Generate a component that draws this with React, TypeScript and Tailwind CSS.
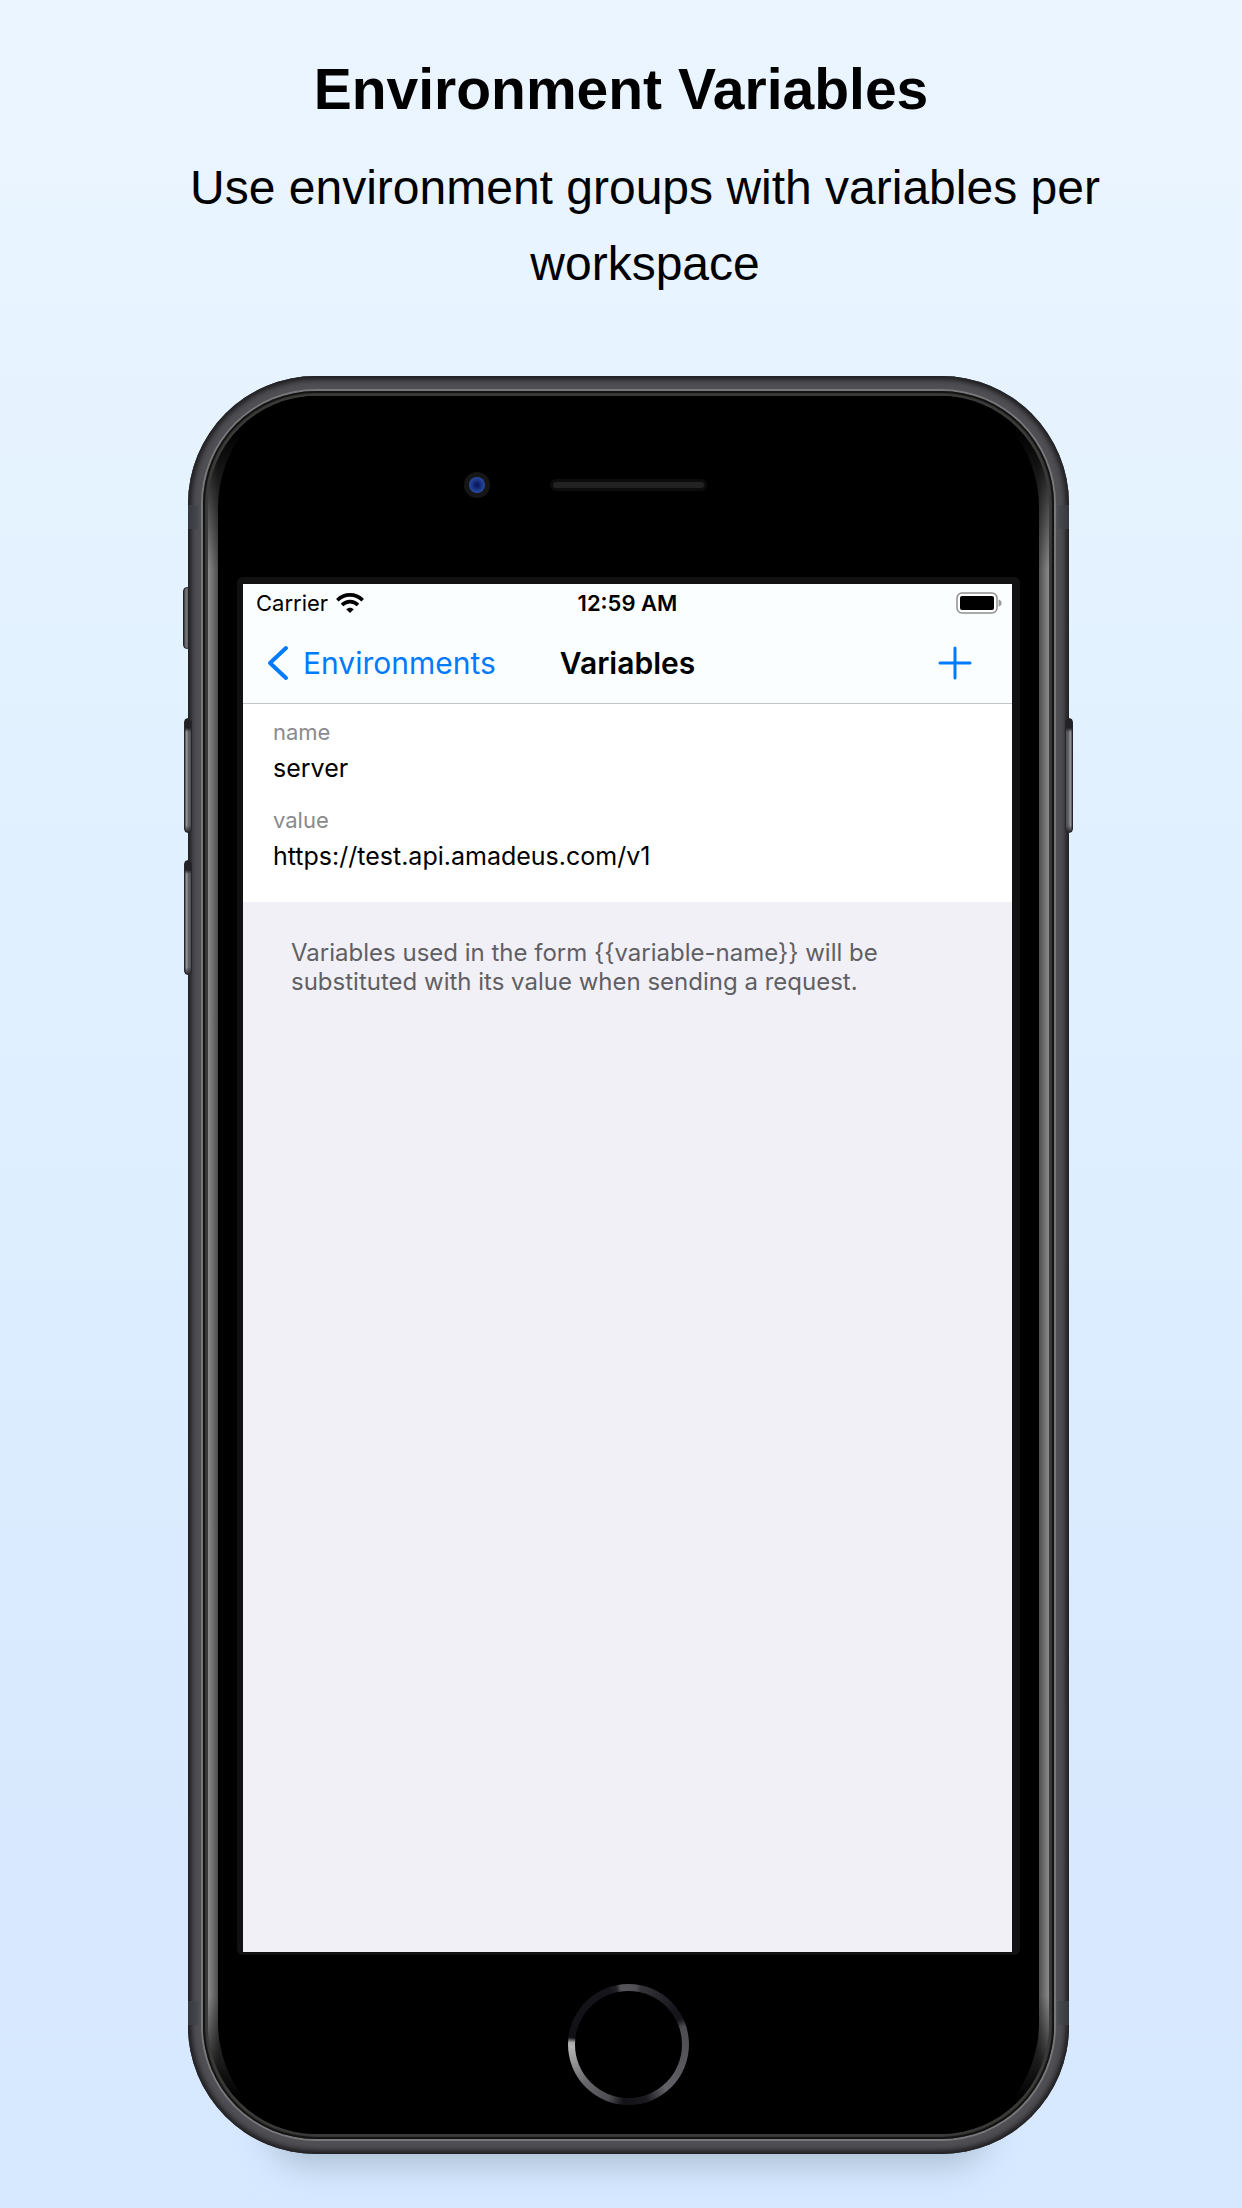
import React from "react";

function WifiIcon() {
  return (
    <svg viewBox="0 0 28 20" className="h-5 w-7" aria-label="Wi-Fi">
      <g fill="none" stroke="#000" strokeWidth="3.6">
        <path d="M1.3 7.2C8.4 .1 19.6 .1 26.7 7.2" />
        <path d="M6 12C10.6 7.5 17.4 7.5 22 12" />
      </g>
      <path d="M10.2 16.2c2.2-2.1 5.4-2.1 7.6 0L14 20z" />
    </svg>
  );
}

function BatteryIcon() {
  return (
    <svg viewBox="0 0 46 22" className="h-[22px] w-[46px]" aria-label="Battery full">
      <rect x="1" y="1" width="40" height="20" rx="5" fill="#fff" stroke="#8f8f8f" strokeWidth="1.5" />
      <rect x="4" y="4" width="34" height="14" rx="2" />
      <path d="M42.600 7.500c4 1 4 6 0 7z" fill="#9a9a9a" />
    </svg>
  );
}

function Field({ id, label, value }: { id: string; label: string; value: string }) {
  return (
    <div className="flex flex-col">
      <label htmlFor={id} className="text-[22px] leading-7 text-[#8a8a8e]">
        {label}
      </label>
      <input
        id={id}
        defaultValue={value}
        className="mt-1 h-9 w-full bg-transparent p-0 text-[25px] leading-9 text-black outline-none"
      />
    </div>
  );
}

function Screen() {
  return (
    <div className="flex aspect-[769/1368] w-full flex-col bg-[#f1f0f6] font-['Inter',sans-serif]">
      <header className="border-b border-[#c4c5c8] bg-[#fbfeff]">
        <div className="grid h-[38px] grid-cols-3 items-center px-[10px] text-[22px] leading-6">
          <div className="flex items-center gap-2 pl-[3px]">
            <span>Carrier</span>
            <WifiIcon />
          </div>
          <span className="text-center font-semibold">12:59 AM</span>
          <div className="flex justify-end">
            <BatteryIcon />
          </div>
        </div>
        <div className="grid h-[81px] grid-cols-[1fr_auto_1fr] items-center px-6">
          <button className="flex items-center gap-3.5 text-[30px] leading-9 text-[#007aff]">
            <svg viewBox="0 0 22 36" className="h-9 w-[22px]">
              <path d="M19 3L3 18L19 33" fill="none" stroke="currentColor" strokeWidth="4" strokeLinecap="round" strokeLinejoin="round" />
            </svg>
            Environments
          </button>
          <h2 className="text-[30px] font-semibold leading-9">Variables</h2>
          <button aria-label="Add variable" className="mr-4 justify-self-end text-[#007aff]">
            <svg viewBox="0 0 34 34" className="h-[34px] w-[34px]">
              <path d="M17 2V32M2 17H32" fill="none" stroke="currentColor" strokeWidth="3" strokeLinecap="round" />
            </svg>
          </button>
        </div>
      </header>
      <form className="flex flex-col gap-5 bg-white px-[30px] pb-7 pt-[14px]">
        <Field id="variable-name" label="name" value="server" />
        <Field id="variable-value" label="value" value="https://test.api.amadeus.com/v1" />
      </form>
      <p className="px-12 pt-9 text-[24px] leading-[29px] text-[#5f5f64]">
        Variables used in the form {"{{variable-name}}"} will be
        <br />
        substituted with its value when sending a request.
      </p>
    </div>
  );
}

const sideKey =
  "absolute w-2 rounded-sm border border-[#26262a] bg-[linear-gradient(180deg,#222226_0px,#222226_9px,transparent_13px,transparent_94%,#2b2b2f),linear-gradient(90deg,#4b4c50,#a0a0a4_30%,#66676b_50%,#505156)]";

const band = "absolute h-6 w-[15px] bg-[linear-gradient(90deg,#34373b,#44474c_60%,#55585c)]";

function Phone() {
  return (
    <div className="relative">
      <div className="absolute inset-x-20 bottom-0 h-20 translate-y-3 rounded-full bg-[#8198ac] opacity-50 blur-lg" />
      <div className="absolute -left-[5px] top-[211px] h-[62px] w-2 rounded-sm border border-[#222226] bg-[linear-gradient(90deg,#37383c,#77787c_35%,#45464a)]" />
      <div className="relative rounded-[128px] bg-[#515156] p-[13px] shadow-[inset_0_0_4px_3px_#202022,inset_0_0_10px_4px_#3b3b40]">
        <div className={band + " left-0 top-[129px]"} />
        <div className={band + " right-0 top-[129px] -scale-x-100"} />
        <div className={band + " bottom-[129px] left-0"} />
        <div className={band + " bottom-[129px] right-0 -scale-x-100"} />
        <div className="relative rounded-[115px] bg-[#77777c] p-[2px]">
          <div className="rounded-[113px] bg-[#3a3a38] p-[5px] shadow-[inset_0_0_1px_2px_#121211]">
            <div className="rounded-[108px] bg-[linear-gradient(180deg,#000_2%,transparent_10%,transparent_92%,#000_98%),linear-gradient(90deg,#8c8c8c_0px,#484848_11px,#484848_calc(100%-11px),#8c8c8c)] px-[10px]">
              <div className="rounded-[98px/112px] bg-black px-[19px]">
                <div className="grid h-[181px] grid-cols-[1fr_auto_1fr] items-center pb-1">
                  <div className="mr-[60px] flex size-[26px] items-center justify-center justify-self-end rounded-full bg-[#161616]">
                    <div className="size-4 rounded-full bg-[radial-gradient(circle_at_50%_50%,#0a1a5c_10%,#23439a_60%,#3c64ae)]" />
                  </div>
                  <div className="h-3 w-[157px] rounded-full border-[3px] border-[#0c0c0c] bg-[#222]" />
                </div>
                <div className="rounded-md bg-[#111] pb-[3px] pl-1.5 pr-2 pt-[7px]">
                  <Screen />
                </div>
                <div className="flex h-[179px] items-center justify-center">
                  <button
                    aria-label="Home"
                    className="size-[121px] rounded-full bg-[conic-gradient(#545458_0deg,#505054_8deg,#35353a_12deg,#15151b_55deg,#15151b_64deg,#4b4b50_72deg,#5a5a60_120deg,#626267_140deg,#1a1a20_162deg,#111117_185deg,#4c4c51_200deg,#6a6a6e_230deg,#b5b5b5_268deg,#aaa_272deg,#101016_277deg,#15151b_340deg,#222227_348deg,#545458_352deg)] p-[7px]"
                  >
                    <span className="block size-full rounded-full bg-black" />
                  </button>
                </div>
              </div>
            </div>
          </div>
        </div>
      </div>
      <div className={sideKey + " -left-1 top-[342px] h-[115px]"} />
      <div className={sideKey + " -left-1 top-[484px] h-[115px]"} />
      <div className={sideKey + " -right-1 top-[342px] h-[115px] -scale-x-100"} />
    </div>
  );
}

export default function App() {
  return (
    <main className="min-h-screen overflow-hidden bg-[linear-gradient(180deg,#ebf5ff,#e3f2ff_30%,#dcedff_60%,#d8e9ff_85%,#d6e8ff)] pb-[53px] font-['Liberation_Sans',Arial,sans-serif] text-black">
      <div className="text-center">
        <h1 className="pt-14 text-[57px] font-bold leading-[66px]">Environment Variables</h1>
        <p className="mx-auto max-w-[1020px] pl-12 pt-7 text-[48px] leading-[76px]">
          Use environment groups with variables per workspace
        </p>
      </div>
      <div className="pl-[188px] pr-[173px] pt-[74px]">
        <Phone />
      </div>
    </main>
  );
}
